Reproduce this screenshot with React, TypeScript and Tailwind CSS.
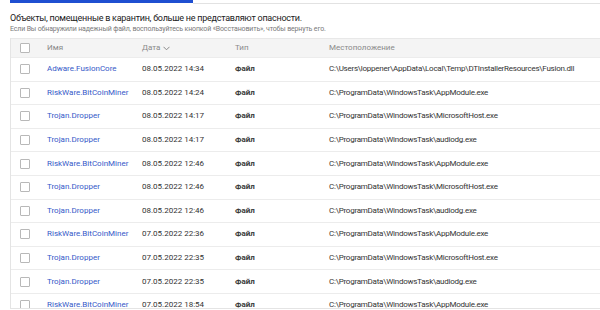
import React from "react";

const rows = [
  ["Adware.FusionCore", "08.05.2022 14:34", "C:\\Users\\loppener\\AppData\\Local\\Temp\\DTInstallerResources\\Fusion.dll"],
  ["RiskWare.BitCoinMiner", "08.05.2022 14:24", "C:\\ProgramData\\WindowsTask\\AppModule.exe"],
  ["Trojan.Dropper", "08.05.2022 14:17", "C:\\ProgramData\\WindowsTask\\MicrosoftHost.exe"],
  ["Trojan.Dropper", "08.05.2022 14:17", "C:\\ProgramData\\WindowsTask\\audiodg.exe"],
  ["RiskWare.BitCoinMiner", "08.05.2022 12:46", "C:\\ProgramData\\WindowsTask\\AppModule.exe"],
  ["Trojan.Dropper", "08.05.2022 12:46", "C:\\ProgramData\\WindowsTask\\MicrosoftHost.exe"],
  ["Trojan.Dropper", "08.05.2022 12:46", "C:\\ProgramData\\WindowsTask\\audiodg.exe"],
  ["RiskWare.BitCoinMiner", "07.05.2022 22:36", "C:\\ProgramData\\WindowsTask\\AppModule.exe"],
  ["Trojan.Dropper", "07.05.2022 22:35", "C:\\ProgramData\\WindowsTask\\MicrosoftHost.exe"],
  ["Trojan.Dropper", "07.05.2022 22:35", "C:\\ProgramData\\WindowsTask\\audiodg.exe"],
  ["RiskWare.BitCoinMiner", "07.05.2022 18:54", "C:\\ProgramData\\WindowsTask\\AppModule.exe"],
];

function Box() {
  return <div className="w-[10px] h-[10px] border border-[#b8b8b8] rounded-[1px] bg-white" />;
}

export default function App() {
  return (
    <div className="w-[600px] h-[310px] bg-white overflow-hidden" style={{ fontFamily: 'Roboto, sans-serif' }}>
      <div className="flex items-start h-[4px] overflow-visible">
        <div className="w-[10px] shrink-0" />
        <div className="w-[183px] h-[3px] shrink-0" style={{ backgroundColor: "#1f4fd1" }} />
        <div className="flex-1 h-[4px]" style={{ borderBottom: "1px solid #e2e2e2" }} />
      </div>
      <div className="pl-[10px] pt-[8px] text-[9px] tracking-[-0.25px] leading-[12px] text-[#222]">
        Объекты, помещенные в карантин, больше не представляют опасности.
      </div>
      <div className="pl-[10px] pt-0 text-[7px] tracking-[-0.15px] leading-[10px] text-[#7a7a7a]">
        Если Вы обнаружили надежный файл, воспользуйтесь кнопкой «Восстановить», чтобы вернуть его.
      </div>
      <div className="ml-[10px] mt-[4px] h-[271px] overflow-hidden border-l border-b border-[#e4e4e4]">
        <div className="flex items-center h-[19px] bg-[#f4f4f4] border-t border-[#e8e8e8] text-[8px] text-[#8a8a8a]">
          <div className="w-[36px] flex pl-[9px]"><Box /></div>
          <div className="w-[95px]">Имя</div>
          <div className="w-[93px] flex items-center gap-[3px]">
            Дата
            <svg width="7" height="5" viewBox="0 0 7 5"><path d="M0.5 0.8 L3.5 3.8 L6.5 0.8" fill="none" stroke="#8a8a8a" strokeWidth="1" /></svg>
          </div>
          <div className="w-[94px]">Тип</div>
          <div className="flex-1">Местоположение</div>
        </div>
        {rows.map((r, i) => (
          <div key={i} className="flex items-center h-[23.6px] border-t border-[#ececec] text-[8px]">
            <div className="w-[36px] flex pl-[9px]"><Box /></div>
            <div className="w-[95px] text-[#3559c8]">{r[0]}</div>
            <div className="w-[93px] text-[#333]">{r[1]}</div>
            <div className="w-[94px] text-[#3a3a3a] font-bold">Файл</div>
            <div className="flex-1 text-[#333] whitespace-nowrap tracking-[-0.25px]">{r[2]}</div>
          </div>
        ))}
      </div>
    </div>
  );
}
